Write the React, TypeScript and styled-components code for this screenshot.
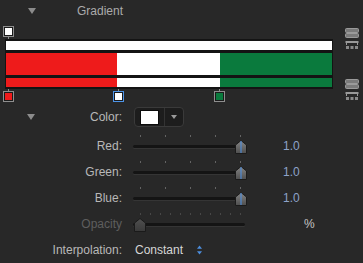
import styled, { createGlobalStyle } from 'styled-components';

const GlobalStyle = createGlobalStyle`
  html, body {
    margin: 0;
    padding: 0;
    background: #282828;
  }
  body {
    font-family: 'Liberation Sans', Arial, sans-serif;
    font-size: 12px;
  }
`;

type Stop = { color: string; at: number; selected?: boolean };

const topStops: Stop[] = [{ color: '#ffffff', at: 0 }];
const bottomStops: Stop[] = [
  { color: '#ee1b1b', at: 0 },
  { color: '#ffffff', at: 110, selected: true },
  { color: '#0a7a3d', at: 211 },
];

const Panel = styled.div`
  width: 363px;
  height: 263px;
  overflow: hidden;
  background: #282828;
  display: flex;
  flex-direction: column;
`;

const Header = styled.div`
  height: 25px;
  display: flex;
  align-items: center;
`;

const Disclosure = styled.span<{ $left: number }>`
  width: 0;
  height: 0;
  margin-left: ${(p) => p.$left}px;
  border-left: 4px solid transparent;
  border-right: 4px solid transparent;
  border-top: 6px solid #8c8c8c;
`;

const HeaderTitle = styled.span`
  margin-left: 41px;
  color: #ababab;
  font-size: 12px;
`;

const Editor = styled.div`
  display: flex;
  margin-top: 5px;
`;

const EditorMain = styled.div`
  margin-left: 3px;
  width: 330px;
  display: flex;
  flex-direction: column;
`;

const StopRow = styled.div`
  position: relative;
  height: 13px;
`;

const StopMarker = styled.div<{ $bottom?: boolean }>`
  position: absolute;
  top: 0;
  width: 11px;
  height: 13px;
  display: flex;
  flex-direction: ${(p) => (p.$bottom ? 'column-reverse' : 'column')};
  align-items: center;
`;

const StopSwatch = styled.div<{ $color: string; $selected?: boolean }>`
  box-sizing: border-box;
  width: 11px;
  height: 11px;
  border: 1px solid ${(p) => (p.$selected ? '#4d94e8' : '#8e8e8e')};
  box-shadow: inset 0 0 0 1px #1a1a1a;
  background: ${(p) => p.$color};
`;

const StopStem = styled.div`
  width: 1px;
  height: 2px;
  background: #8e8e8e;
`;

const BarStack = styled.div`
  margin-left: 2px;
  width: 328px;
  box-sizing: border-box;
  padding: 2px 1px;
  background: #141414;
  display: flex;
  flex-direction: column;
  gap: 3px;
`;

const Bar = styled.div<{ $h: number; $fill: string }>`
  height: ${(p) => p.$h}px;
  background: ${(p) => p.$fill};
`;

const IconColumn = styled.div`
  margin-left: 12px;
  padding-top: 2px;
  display: flex;
  flex-direction: column;
  gap: 29px;
`;

const Rows = styled.div`
  display: flex;
  flex-direction: column;
  margin-top: 5px;
`;

const Row = styled.div<{ $h: number }>`
  height: ${(p) => p.$h}px;
  display: flex;
  align-items: center;
`;

const LabelCell = styled.div`
  width: 122px;
  display: flex;
  align-items: center;
  justify-content: flex-end;
  flex-shrink: 0;
`;

const Label = styled.span<{ $dim?: boolean }>`
  margin-left: auto;
  color: ${(p) => (p.$dim ? '#5e5e5e' : '#b8b8b8')};
  font-size: 12px;
`;

const Control = styled.div`
  margin-left: 11px;
  display: flex;
  align-items: center;
`;

const ColorWell = styled.div`
  box-sizing: border-box;
  margin-left: 1px;
  width: 50px;
  height: 20px;
  border: 1px solid #3a3a3a;
  border-radius: 4px;
  background: #1d1d1d;
  display: flex;
  align-items: center;
  padding-left: 5px;
`;

const WellSwatch = styled.div`
  box-sizing: border-box;
  width: 19px;
  height: 15px;
  background: #ffffff;
  border: 1px solid #0c0c0c;
`;

const WellDivider = styled.div`
  width: 1px;
  height: 18px;
  margin-left: 5px;
  background: #333333;
`;

const WellArrow = styled.span`
  margin-left: 6px;
  width: 0;
  height: 0;
  border-left: 3px solid transparent;
  border-right: 3px solid transparent;
  border-top: 4px solid #9a9a9a;
`;

const SliderBox = styled.div`
  position: relative;
  width: 114px;
  height: 26px;
  display: flex;
  flex-direction: column;
`;

const Ticks = styled.div`
  margin-top: 2px;
  height: 2px;
  padding: 0 6px 0 7px;
  display: flex;
  justify-content: space-between;
`;

const Tick = styled.span<{ $dim?: boolean }>`
  width: 1px;
  height: 2px;
  background: ${(p) => (p.$dim ? '#474747' : '#646464')};
`;

const Track = styled.div`
  margin-top: 8px;
  width: 112px;
  height: 3px;
  border-radius: 2px;
  background: #141414;
  box-shadow: 0 1px 0 #353535;
`;

const Thumb = styled.svg`
  position: absolute;
  top: 7px;
`;

const Value = styled.span`
  margin-left: 36px;
  color: #8ea3c9;
  font-size: 12px;
`;

const Percent = styled.span`
  margin-left: 57px;
  color: #c4c4c4;
  font-size: 12px;
`;

const PopupText = styled.span`
  margin-left: 2px;
  color: #d6d6d6;
  font-size: 12px;
`;

const Stepper = styled.svg`
  margin-left: 14px;
`;

const StackIcons = () => (
  <svg width="14" height="22" viewBox="0 0 14 22">
    <rect x="0.5" y="0.5" width="13" height="4" rx="1" fill="#7a7a7a" stroke="#9a9a9a" strokeWidth="1" />
    <rect x="0.5" y="5.5" width="13" height="4" rx="1" fill="#7a7a7a" stroke="#9a9a9a" strokeWidth="1" />
    <rect x="0.5" y="13" width="13" height="2" fill="#9a9a9a" />
    <rect x="1" y="15" width="1" height="2" fill="#9a9a9a" />
    <rect x="12" y="15" width="1" height="2" fill="#9a9a9a" />
    <rect x="1" y="18" width="3" height="3" fill="#8a8a8a" />
    <rect x="5.5" y="18" width="3" height="3" fill="#8a8a8a" />
    <rect x="10" y="18" width="3" height="3" fill="#8a8a8a" />
  </svg>
);

const Slider = ({ value, ticks, disabled }: { value: number; ticks: number; disabled?: boolean }) => (
  <SliderBox>
    <Ticks>
      {Array.from({ length: ticks }).map((_, i) => (
        <Tick key={i} $dim={disabled} />
      ))}
    </Ticks>
    <Track />
    <Thumb width="12" height="14" viewBox="0 0 12 14" style={{ left: 1 + value * 101 }}>
      <defs>
        <linearGradient id={disabled ? 'tg-d' : 'tg'} x1="0" y1="0" x2="0" y2="1">
          <stop offset="0" stopColor={disabled ? '#505050' : '#858585'} />
          <stop offset="1" stopColor={disabled ? '#3a3a3a' : '#4e4e4e'} />
        </linearGradient>
      </defs>
      <path
        d="M6 0.5 L11.5 5 L11.5 13.5 L0.5 13.5 L0.5 5 Z"
        fill={`url(#${disabled ? 'tg-d' : 'tg'})`}
        stroke="#1a1a1a"
        strokeWidth="1"
      />
      {!disabled && <rect x="5.5" y="1" width="1" height="12" fill="#4a90e6" />}
    </Thumb>
  </SliderBox>
);

const channels = [
  { name: 'Red', value: 1 },
  { name: 'Green', value: 1 },
  { name: 'Blue', value: 1 },
];

const App = () => {
  return (
    <>
      <GlobalStyle />
      <Panel>
        <Header>
          <Disclosure $left={28} />
          <HeaderTitle>Gradient</HeaderTitle>
        </Header>
        <Editor>
          <EditorMain>
            <StopRow>
              {topStops.map((s) => (
                <StopMarker key={s.at} style={{ left: s.at }}>
                  <StopSwatch $color={s.color} $selected={s.selected} />
                  <StopStem />
                </StopMarker>
              ))}
            </StopRow>
            <BarStack>
              <Bar $h={9} $fill="#ffffff" />
              <Bar $h={22} $fill="linear-gradient(to right, #ee1b1b 0 34.2%, #ffffff 34.2% 65.6%, #0a7a3d 65.6%)" />
              <Bar $h={9} $fill="linear-gradient(to right, #ee1b1b 0 34.2%, #ffffff 34.2% 65.6%, #0a7a3d 65.6%)" />
            </BarStack>
            <StopRow>
              {bottomStops.map((s) => (
                <StopMarker key={s.at} $bottom style={{ left: s.at }}>
                  <StopSwatch $color={s.color} $selected={s.selected} />
                  <StopStem />
                </StopMarker>
              ))}
            </StopRow>
          </EditorMain>
          <IconColumn>
            <StackIcons />
            <StackIcons />
          </IconColumn>
        </Editor>
        <Rows>
          <Row $h={20}>
            <LabelCell>
              <Disclosure $left={27} />
              <Label>Color:</Label>
            </LabelCell>
            <Control>
              <ColorWell>
                <WellSwatch />
                <WellDivider />
                <WellArrow />
              </ColorWell>
            </Control>
          </Row>
          <Row $h={6} />
          {channels.map((c) => (
            <Row $h={26} key={c.name}>
              <LabelCell>
                <Label>{c.name}:</Label>
              </LabelCell>
              <Control>
                <Slider value={c.value} ticks={5} />
                <Value>{c.value.toFixed(1)}</Value>
              </Control>
            </Row>
          ))}
          <Row $h={26}>
            <LabelCell>
              <Label $dim>Opacity</Label>
            </LabelCell>
            <Control>
              <Slider value={0} ticks={11} disabled />
              <Percent>%</Percent>
            </Control>
          </Row>
          <Row $h={26}>
            <LabelCell>
              <Label>Interpolation:</Label>
            </LabelCell>
            <Control>
              <PopupText>Constant</PopupText>
              <Stepper width="5" height="10" viewBox="0 0 5 10">
                <path d="M2.5 0.5 L5 3.8 L0 3.8 Z" fill="#4d8fe0" />
                <path d="M2.5 9.5 L5 6.2 L0 6.2 Z" fill="#4d8fe0" />
              </Stepper>
            </Control>
          </Row>
        </Rows>
      </Panel>
    </>
  );
};

export default App;
